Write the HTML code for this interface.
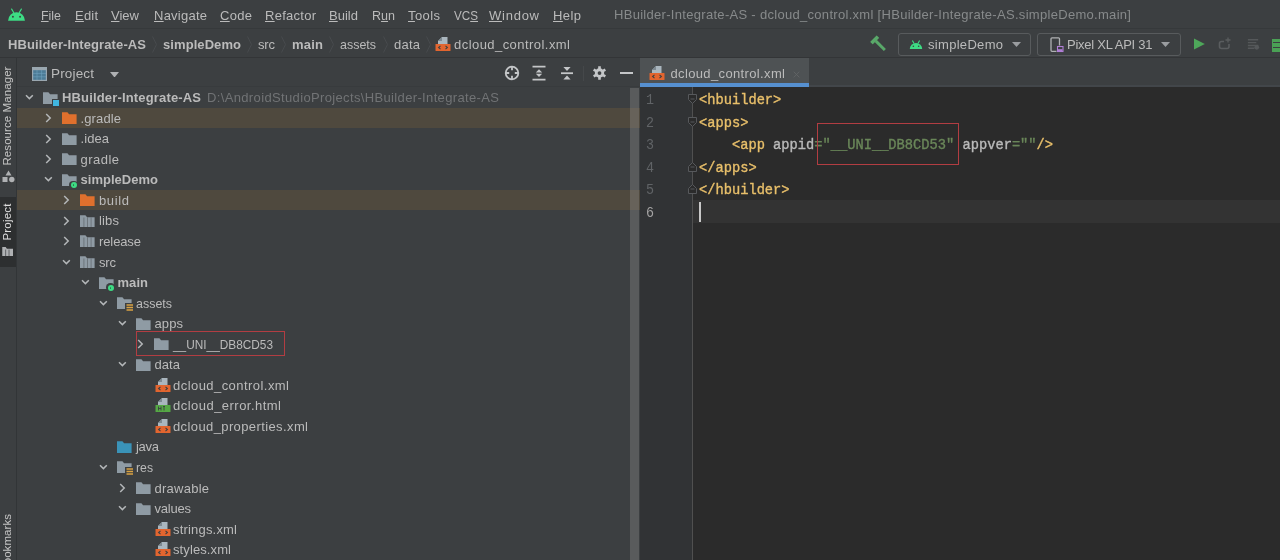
<!DOCTYPE html>
<html><head><meta charset="utf-8"><title>Android Studio</title><style>html,body{margin:0;padding:0;background:#3c3f41}
#root{position:relative;width:1280px;height:560px;overflow:hidden;font-family:"Liberation Sans",sans-serif;-webkit-font-smoothing:antialiased;will-change:transform}
#txt{position:absolute;left:0;top:0;width:1280px;height:560px;will-change:transform}
.t{position:absolute;white-space:pre;}
.r{position:absolute;display:block}
u{text-decoration:underline;text-underline-offset:0.6px;text-decoration-thickness:1px}
</style></head><body><div id="root">
<div class="r" style="left:0px;top:0px;width:1280px;height:560px;background:#3c3f41;"></div>
<div class="r" style="left:0px;top:28px;width:1280px;height:1px;background:#36393b;"></div>
<div class="r" style="left:0px;top:57px;width:1280px;height:1px;background:#333537;"></div>
<div class="r" style="left:0px;top:58px;width:16px;height:502px;background:#3c3f41;"></div>
<div class="r" style="left:16px;top:58px;width:1px;height:502px;background:#323537;"></div>
<div class="r" style="left:17px;top:86px;width:623px;height:1px;background:#383b3d;"></div>
<div class="r" style="left:640px;top:60px;width:640px;height:27px;background:#3c3f41;"></div>
<div class="r" style="left:809px;top:85px;width:471px;height:1.5px;background:#42464a;"></div>
<div class="r" style="left:640px;top:87px;width:640px;height:473px;background:#2b2b2b;"></div>
<div class="r" style="left:640px;top:87px;width:52px;height:473px;background:#313335;"></div>
<span class="t" style="left:41.00px;top:7.70px;font-size:13px;line-height:15.60px;font-weight:400;color:#bbbbbb;font-family:'Liberation Sans';letter-spacing:0.000px;transform:scaleX(0.9545);transform-origin:left center;"><u>F</u>ile</span>
<span class="t" style="left:75.00px;top:7.70px;font-size:13px;line-height:15.60px;font-weight:400;color:#bbbbbb;font-family:'Liberation Sans';letter-spacing:0.198px;"><u>E</u>dit</span>
<span class="t" style="left:111.00px;top:7.70px;font-size:13px;line-height:15.60px;font-weight:400;color:#bbbbbb;font-family:'Liberation Sans';letter-spacing:0.016px;"><u>V</u>iew</span>
<span class="t" style="left:154.00px;top:7.70px;font-size:13px;line-height:15.60px;font-weight:400;color:#bbbbbb;font-family:'Liberation Sans';letter-spacing:0.241px;"><u>N</u>avigate</span>
<span class="t" style="left:220.00px;top:7.70px;font-size:13px;line-height:15.60px;font-weight:400;color:#bbbbbb;font-family:'Liberation Sans';letter-spacing:0.307px;"><u>C</u>ode</span>
<span class="t" style="left:265.00px;top:7.70px;font-size:13px;line-height:15.60px;font-weight:400;color:#bbbbbb;font-family:'Liberation Sans';letter-spacing:0.266px;"><u>R</u>efactor</span>
<span class="t" style="left:329.00px;top:7.70px;font-size:13px;line-height:15.60px;font-weight:400;color:#bbbbbb;font-family:'Liberation Sans';letter-spacing:0.020px;"><u>B</u>uild</span>
<span class="t" style="left:372.00px;top:7.70px;font-size:13px;line-height:15.60px;font-weight:400;color:#bbbbbb;font-family:'Liberation Sans';letter-spacing:0.000px;transform:scaleX(0.9640);transform-origin:left center;">R<u>u</u>n</span>
<span class="t" style="left:408.00px;top:7.70px;font-size:13px;line-height:15.60px;font-weight:400;color:#bbbbbb;font-family:'Liberation Sans';letter-spacing:0.410px;"><u>T</u>ools</span>
<span class="t" style="left:454.00px;top:7.70px;font-size:13px;line-height:15.60px;font-weight:400;color:#bbbbbb;font-family:'Liberation Sans';letter-spacing:0.000px;transform:scaleX(0.8977);transform-origin:left center;">VC<u>S</u></span>
<span class="t" style="left:489.00px;top:7.70px;font-size:13px;line-height:15.60px;font-weight:400;color:#bbbbbb;font-family:'Liberation Sans';letter-spacing:0.750px;"><u>W</u>indow</span>
<span class="t" style="left:553.00px;top:7.70px;font-size:13px;line-height:15.60px;font-weight:400;color:#bbbbbb;font-family:'Liberation Sans';letter-spacing:0.417px;"><u>H</u>elp</span>
<span class="t" style="left:614.00px;top:6.80px;font-size:13px;line-height:15.60px;font-weight:400;color:#878a8b;font-family:'Liberation Sans';letter-spacing:0.299px;">HBuilder-Integrate-AS - dcloud_control.xml [HBuilder-Integrate-AS.simpleDemo.main]</span>
<svg class="r" style="left:6.5px;top:7px" width="19" height="14.78" viewBox="0 0 18 14"><path d="M1 13a8 8 0 0 1 16 0z" fill="#3ddc84"/><path d="M4.4 2l1.9 3.2M13.6 2l-1.9 3.2" stroke="#3ddc84" stroke-width="1.1" stroke-linecap="round"/><circle cx="5.6" cy="9.3" r="0.9" fill="#3c3f41"/><circle cx="12.4" cy="9.3" r="0.9" fill="#3c3f41"/></svg>
<span class="t" style="left:8.00px;top:36.80px;font-size:13px;line-height:15.60px;font-weight:700;color:#bbbbbb;font-family:'Liberation Sans';letter-spacing:0.110px;">HBuilder-Integrate-AS</span>
<span class="t" style="left:163.00px;top:36.80px;font-size:13px;line-height:15.60px;font-weight:700;color:#bbbbbb;font-family:'Liberation Sans';letter-spacing:0.076px;">simpleDemo</span>
<span class="t" style="left:258.00px;top:36.80px;font-size:13px;line-height:15.60px;font-weight:400;color:#bbbbbb;font-family:'Liberation Sans';letter-spacing:-0.172px;">src</span>
<span class="t" style="left:292.00px;top:36.80px;font-size:13px;line-height:15.60px;font-weight:700;color:#bbbbbb;font-family:'Liberation Sans';letter-spacing:0.219px;">main</span>
<span class="t" style="left:340.00px;top:36.80px;font-size:13px;line-height:15.60px;font-weight:400;color:#bbbbbb;font-family:'Liberation Sans';letter-spacing:0.000px;transform:scaleX(0.9580);transform-origin:left center;">assets</span>
<span class="t" style="left:394.00px;top:36.80px;font-size:13px;line-height:15.60px;font-weight:400;color:#bbbbbb;font-family:'Liberation Sans';letter-spacing:0.229px;">data</span>
<span class="t" style="left:454.00px;top:36.80px;font-size:13px;line-height:15.60px;font-weight:400;color:#bbbbbb;font-family:'Liberation Sans';letter-spacing:0.448px;">dcloud_control.xml</span>
<svg class="r" style="left:151px;top:36px" width="7" height="17" viewBox="0 0 7 17"><path d="M1.5 0.5L5.5 8.5L1.5 16.5" fill="none" stroke="#474a4d" stroke-width="1"/></svg>
<svg class="r" style="left:246px;top:36px" width="7" height="17" viewBox="0 0 7 17"><path d="M1.5 0.5L5.5 8.5L1.5 16.5" fill="none" stroke="#474a4d" stroke-width="1"/></svg>
<svg class="r" style="left:280px;top:36px" width="7" height="17" viewBox="0 0 7 17"><path d="M1.5 0.5L5.5 8.5L1.5 16.5" fill="none" stroke="#474a4d" stroke-width="1"/></svg>
<svg class="r" style="left:328px;top:36px" width="7" height="17" viewBox="0 0 7 17"><path d="M1.5 0.5L5.5 8.5L1.5 16.5" fill="none" stroke="#474a4d" stroke-width="1"/></svg>
<svg class="r" style="left:382px;top:36px" width="7" height="17" viewBox="0 0 7 17"><path d="M1.5 0.5L5.5 8.5L1.5 16.5" fill="none" stroke="#474a4d" stroke-width="1"/></svg>
<svg class="r" style="left:425px;top:36px" width="7" height="17" viewBox="0 0 7 17"><path d="M1.5 0.5L5.5 8.5L1.5 16.5" fill="none" stroke="#474a4d" stroke-width="1"/></svg>
<svg class="r" style="left:435px;top:36px" width="16" height="16" viewBox="0 0 16 16"><path d="M7 1h5.5v7H3V5z" fill="#aab6be"/><path d="M7 1v4H3z" fill="#7d8991"/><rect x="0.5" y="8" width="15" height="7" rx="0.5" fill="#e2652f"/><path d="M5.5 9.8L3.6 11.5l1.9 1.7M10.5 9.8l1.9 1.7l-1.9 1.7" stroke="#3c3f41" stroke-width="1.1" fill="none"/></svg>
<svg class="r" style="left:866px;top:32px" width="24" height="24" viewBox="866 32 24 24"><g transform="translate(873.4 38.6) rotate(-45)" fill="#59a869"><rect x="-4.6" y="0" width="9.2" height="3.6" rx="0.5"/><rect x="-1.45" y="3.2" width="2.9" height="13"/></g></svg>
<div class="r" style="left:898px;top:33px;width:133px;height:23px;box-sizing:border-box;border:1px solid #585b5d;border-radius:3px;background:#3c3f41"></div>
<div class="r" style="left:1037px;top:33px;width:144px;height:23px;box-sizing:border-box;border:1px solid #585b5d;border-radius:3px;background:#3c3f41"></div>
<svg class="r" style="left:908.5px;top:38.5px" width="14" height="10.9" viewBox="0 0 18 14"><path d="M1 13a8 8 0 0 1 16 0z" fill="#3ddc84"/><path d="M4.6 2.4l1.8 3M13.4 2.4l-1.8 3" stroke="#3ddc84" stroke-width="1.3" stroke-linecap="round"/><circle cx="5.6" cy="9.3" r="1" fill="#3c3f41"/><circle cx="12.4" cy="9.3" r="1" fill="#3c3f41"/></svg>
<span class="t" style="left:928.00px;top:36.70px;font-size:13px;line-height:15.60px;font-weight:400;color:#bbbbbb;font-family:'Liberation Sans';letter-spacing:0.306px;">simpleDemo</span>
<svg class="r" style="left:1012px;top:42px" width="9" height="5" viewBox="0 0 9 5"><path d="M0 0h9l-4.5 5z" fill="#9a9da0"/></svg>
<svg class="r" style="left:1161px;top:42px" width="9" height="5" viewBox="0 0 9 5"><path d="M0 0h9l-4.5 5z" fill="#9a9da0"/></svg>
<svg class="r" style="left:1050px;top:37px" width="14" height="16" viewBox="0 0 14 16"><rect x="1" y="0.8" width="8.5" height="13.5" rx="1" fill="none" stroke="#afb1b3" stroke-width="1.3"/><rect x="6.5" y="8.5" width="7" height="6.5" fill="#3c3f41"/><rect x="7.5" y="9.5" width="5.5" height="5" fill="none" stroke="#b07fd6" stroke-width="1.1"/><rect x="8" y="12.2" width="4.5" height="1.8" fill="#b07fd6"/></svg>
<span class="t" style="left:1067.00px;top:36.70px;font-size:13px;line-height:15.60px;font-weight:400;color:#bbbbbb;font-family:'Liberation Sans';letter-spacing:-0.260px;">Pixel XL API 31</span>
<svg class="r" style="left:1193px;top:38px" width="13" height="13" viewBox="0 0 13 13"><path d="M1 0.6L11.8 6.1L1 11.6z" fill="#4ea75a"/></svg>
<svg class="r" style="left:1217px;top:36px" width="16" height="16" viewBox="0 0 16 16"><path d="M11 1.5v5M8.5 4h5" stroke="#5a5d5f" stroke-width="1.3"/><path d="M7 5.5H4.5a2 2 0 0 0-2 2v3a2 2 0 0 0 2 2H10a2 2 0 0 0 2-2V8" fill="none" stroke="#5a5d5f" stroke-width="1.6"/></svg>
<svg class="r" style="left:1245.5px;top:37px" width="15" height="15" viewBox="0 0 16 16"><path d="M2 3h11M2 6h9M2 9h11M2 12h7" stroke="#55585a" stroke-width="1.5"/><circle cx="11.5" cy="11" r="2.5" fill="#55585a"/></svg>
<div class="r" style="left:1272px;top:38.5px;width:8px;height:13px;background:#4aa155;"></div>
<div class="r" style="left:1273px;top:42.3px;width:7px;height:1.2px;background:#3c3f41;"></div>
<div class="r" style="left:1273px;top:46.5px;width:7px;height:1.2px;background:#3c3f41;"></div>
<div class="r" style="left:0px;top:197px;width:16px;height:70px;background:#2d2f30;"></div>
<span class="t" style="left:8px;top:115.8px;font-size:11.5px;line-height:13.8px;color:#c4c4c4;letter-spacing:0.079px;transform:translate(-50%,-50%) rotate(-90deg);transform-origin:center">Resource Manager</span>
<span class="t" style="left:8px;top:222.2px;font-size:11.5px;line-height:13.8px;color:#dedede;letter-spacing:0.201px;transform:translate(-50%,-50%) rotate(-90deg);transform-origin:center">Project</span>
<span class="t" style="left:8px;top:542.5px;font-size:11.5px;line-height:13.8px;color:#c4c4c4;letter-spacing:0.059px;transform:translate(-50%,-50%) rotate(-90deg);transform-origin:center">Bookmarks</span>
<svg class="r" style="left:2px;top:170px" width="13" height="13" viewBox="0 0 13 13"><path d="M6.5 0.5l3 5h-6z" fill="#afb1b3"/><rect x="0.5" y="7" width="5" height="5" fill="#afb1b3"/><circle cx="9.8" cy="9.5" r="2.7" fill="#afb1b3"/></svg>
<svg class="r" style="left:1.5px;top:246.5px" width="11.5" height="9.3" viewBox="0 0 13 11"><path d="M0 0h4l1.5 2H13v9H0z" fill="#afb1b3"/><path d="M4 3v8M8 3v8" stroke="#3c3f41" stroke-width="0.8"/></svg>
<svg class="r" style="left:31.5px;top:66.5px" width="15" height="14" viewBox="0 0 15 14"><rect x="0.6" y="0.6" width="13.8" height="12.8" fill="#4c7b96" stroke="#9aa7b0" stroke-width="1.2"/><rect x="0.6" y="0.6" width="13.8" height="2.6" fill="#9aa7b0"/><path d="M5 3v10M9.6 3v10M1 6.4h13M1 9.8h13" stroke="#6fa1bd" stroke-width="0.6"/></svg>
<span class="t" style="left:51.00px;top:66.20px;font-size:13.5px;line-height:16.20px;font-weight:400;color:#bbbbbb;font-family:'Liberation Sans';letter-spacing:0.161px;">Project</span>
<svg class="r" style="left:110px;top:71.5px" width="9" height="5.5" viewBox="0 0 9 5.5"><path d="M0 0h9l-4.5 5.5z" fill="#afb1b3"/></svg>
<svg class="r" style="left:504px;top:65px" width="16" height="16" viewBox="0 0 16 16"><circle cx="8" cy="8" r="6.3" fill="none" stroke="#c4c6c8" stroke-width="1.8"/><path d="M8 1v4.2M8 10.8v4.2M1 8h4.2M10.8 8h4.2" stroke="#c4c6c8" stroke-width="1.8"/></svg>
<svg class="r" style="left:531.5px;top:65px" width="14" height="16" viewBox="0 0 14 16"><path d="M0.5 1.6h13M0.5 14.6h13" stroke="#c4c6c8" stroke-width="1.8"/><path d="M7 4.2l3.2 3.3H3.8zM7 12l3.2-3.3H3.8z" fill="#c4c6c8"/></svg>
<svg class="r" style="left:559.5px;top:65px" width="14" height="16" viewBox="0 0 14 16"><path d="M1 8.2h12" stroke="#c4c6c8" stroke-width="1.8"/><path d="M7 6l3.6-4H3.4zM7 10.4l3.6 4H3.4z" fill="#c4c6c8"/></svg>
<div class="r" style="left:583px;top:66px;width:1px;height:15px;background:#45484a;"></div>
<svg class="r" style="left:592px;top:65px" width="15" height="16" viewBox="0 0 16 16"><g fill="#c4c6c8"><circle cx="8" cy="8" r="5"/><g id="tth"><rect x="6.6" y="0.8" width="2.8" height="14.4"/></g><rect x="6.6" y="0.8" width="2.8" height="14.4" transform="rotate(60 8 8)"/><rect x="6.6" y="0.8" width="2.8" height="14.4" transform="rotate(120 8 8)"/></g><circle cx="8" cy="8" r="2" fill="#3c3f41"/></svg>
<div class="r" style="left:620px;top:72px;width:12.5px;height:2px;background:#c4c6c8;"></div>
<div class="r" style="left:17px;top:108px;width:623px;height:20px;background:#4f493e;"></div>
<div class="r" style="left:17px;top:190px;width:623px;height:20px;background:#4f493e;"></div>
<div class="r" style="left:630px;top:88px;width:9px;height:472px;background:rgba(166,166,166,0.28);"></div>
<svg class="r" style="left:25.4px;top:94.27250000000001px" width="9" height="7" viewBox="0 0 9 7"><path d="M1 1.2l3.4 3.4l3.4-3.4" fill="none" stroke="#b4b7b9" stroke-width="1.5"/></svg>
<svg class="r" style="left:43.0px;top:90.67250000000001px" width="16" height="14" viewBox="0 0 16 14"><path d="M0 1.3h5.4l1.7 2H14.6v9.7H0z" fill="#8f9ba4"/></svg>
<div class="r" style="left:52.2px;top:98.8725px;width:8px;height:8px;background:#3c3f41"></div>
<div class="r" style="left:53.2px;top:99.8725px;width:6px;height:6px;background:#40b6e0"></div>
<span class="t" style="left:62.00px;top:90.17px;font-size:13px;line-height:15.60px;font-weight:700;color:#bbbbbb;font-family:'Liberation Sans';letter-spacing:0.160px;">HBuilder-Integrate-AS</span>
<svg class="r" style="left:44.7px;top:113.2175px" width="7" height="10" viewBox="0 0 7 10"><path d="M1.2 1l4 4l-4 4" fill="none" stroke="#b4b7b9" stroke-width="1.5"/></svg>
<svg class="r" style="left:61.5px;top:111.2175px" width="16" height="14" viewBox="0 0 16 14"><path d="M0 1.3h5.4l1.7 2H14.6v9.7H0z" fill="#e0702d"/></svg>
<span class="t" style="left:80.50px;top:110.72px;font-size:13px;line-height:15.60px;font-weight:400;color:#bbbbbb;font-family:'Liberation Sans';letter-spacing:0.125px;">.gradle</span>
<svg class="r" style="left:44.7px;top:133.76250000000002px" width="7" height="10" viewBox="0 0 7 10"><path d="M1.2 1l4 4l-4 4" fill="none" stroke="#b4b7b9" stroke-width="1.5"/></svg>
<svg class="r" style="left:61.5px;top:131.76250000000002px" width="16" height="14" viewBox="0 0 16 14"><path d="M0 1.3h5.4l1.7 2H14.6v9.7H0z" fill="#8f9ba4"/></svg>
<span class="t" style="left:80.50px;top:131.26px;font-size:13px;line-height:15.60px;font-weight:400;color:#bbbbbb;font-family:'Liberation Sans';letter-spacing:0.074px;">.idea</span>
<svg class="r" style="left:44.7px;top:154.3075px" width="7" height="10" viewBox="0 0 7 10"><path d="M1.2 1l4 4l-4 4" fill="none" stroke="#b4b7b9" stroke-width="1.5"/></svg>
<svg class="r" style="left:61.5px;top:152.3075px" width="16" height="14" viewBox="0 0 16 14"><path d="M0 1.3h5.4l1.7 2H14.6v9.7H0z" fill="#8f9ba4"/></svg>
<span class="t" style="left:80.50px;top:151.81px;font-size:13px;line-height:15.60px;font-weight:400;color:#bbbbbb;font-family:'Liberation Sans';letter-spacing:0.472px;">gradle</span>
<svg class="r" style="left:43.9px;top:176.45250000000001px" width="9" height="7" viewBox="0 0 9 7"><path d="M1 1.2l3.4 3.4l3.4-3.4" fill="none" stroke="#b4b7b9" stroke-width="1.5"/></svg>
<svg class="r" style="left:61.5px;top:172.85250000000002px" width="16" height="14" viewBox="0 0 16 14"><path d="M0 1.3h5.4l1.7 2H14.6v9.7H0z" fill="#8f9ba4"/></svg>
<div class="r" style="left:69.3px;top:180.75250000000003px;width:8.4px;height:8.4px;border-radius:50%;background:#3c3f41"></div>
<div class="r" style="left:70.5px;top:181.95250000000001px;width:6px;height:6px;border-radius:50%;background:#3ddc84"></div>
<div class="r" style="left:72.6px;top:184.0525px;width:1.8px;height:1.8px;border-radius:50%;background:#2c7a4e"></div>
<span class="t" style="left:80.50px;top:172.35px;font-size:13px;line-height:15.60px;font-weight:700;color:#bbbbbb;font-family:'Liberation Sans';letter-spacing:0.021px;">simpleDemo</span>
<svg class="r" style="left:63.2px;top:195.39750000000004px" width="7" height="10" viewBox="0 0 7 10"><path d="M1.2 1l4 4l-4 4" fill="none" stroke="#b4b7b9" stroke-width="1.5"/></svg>
<svg class="r" style="left:80.0px;top:193.39750000000004px" width="16" height="14" viewBox="0 0 16 14"><path d="M0 1.3h5.4l1.7 2H14.6v9.7H0z" fill="#e0702d"/></svg>
<span class="t" style="left:99.00px;top:192.90px;font-size:13px;line-height:15.60px;font-weight:400;color:#bbbbbb;font-family:'Liberation Sans';letter-spacing:0.633px;">build</span>
<svg class="r" style="left:63.2px;top:215.94250000000002px" width="7" height="10" viewBox="0 0 7 10"><path d="M1.2 1l4 4l-4 4" fill="none" stroke="#b4b7b9" stroke-width="1.5"/></svg>
<svg class="r" style="left:80.0px;top:213.94250000000002px" width="16" height="14" viewBox="0 0 16 14"><path d="M0 1.3h5.4l1.7 2H14.6v9.7H0z" fill="#8f9ba4"/></svg>
<svg class="r" style="left:80.0px;top:213.54250000000002px" width="16" height="14" viewBox="0 0 16 14"><path d="M3.9 3.5v9.5M7.5 3.5v9.5M11.1 3.5v9.5" stroke="#3c3f41" stroke-width="0.8" opacity="0.5"/></svg>
<span class="t" style="left:99.00px;top:213.44px;font-size:13px;line-height:15.60px;font-weight:400;color:#bbbbbb;font-family:'Liberation Sans';letter-spacing:0.161px;">libs</span>
<svg class="r" style="left:63.2px;top:236.4875px" width="7" height="10" viewBox="0 0 7 10"><path d="M1.2 1l4 4l-4 4" fill="none" stroke="#b4b7b9" stroke-width="1.5"/></svg>
<svg class="r" style="left:80.0px;top:234.4875px" width="16" height="14" viewBox="0 0 16 14"><path d="M0 1.3h5.4l1.7 2H14.6v9.7H0z" fill="#8f9ba4"/></svg>
<svg class="r" style="left:80.0px;top:234.0875px" width="16" height="14" viewBox="0 0 16 14"><path d="M3.9 3.5v9.5M7.5 3.5v9.5M11.1 3.5v9.5" stroke="#3c3f41" stroke-width="0.8" opacity="0.5"/></svg>
<span class="t" style="left:99.00px;top:233.99px;font-size:13px;line-height:15.60px;font-weight:400;color:#bbbbbb;font-family:'Liberation Sans';letter-spacing:-0.107px;">release</span>
<svg class="r" style="left:62.4px;top:258.6325px" width="9" height="7" viewBox="0 0 9 7"><path d="M1 1.2l3.4 3.4l3.4-3.4" fill="none" stroke="#b4b7b9" stroke-width="1.5"/></svg>
<svg class="r" style="left:80.0px;top:255.0325px" width="16" height="14" viewBox="0 0 16 14"><path d="M0 1.3h5.4l1.7 2H14.6v9.7H0z" fill="#8f9ba4"/></svg>
<svg class="r" style="left:80.0px;top:254.6325px" width="16" height="14" viewBox="0 0 16 14"><path d="M3.9 3.5v9.5M7.5 3.5v9.5M11.1 3.5v9.5" stroke="#3c3f41" stroke-width="0.8" opacity="0.5"/></svg>
<span class="t" style="left:99.00px;top:254.53px;font-size:13px;line-height:15.60px;font-weight:400;color:#bbbbbb;font-family:'Liberation Sans';letter-spacing:-0.172px;">src</span>
<svg class="r" style="left:80.9px;top:279.1775px" width="9" height="7" viewBox="0 0 9 7"><path d="M1 1.2l3.4 3.4l3.4-3.4" fill="none" stroke="#b4b7b9" stroke-width="1.5"/></svg>
<svg class="r" style="left:98.5px;top:275.5775px" width="16" height="14" viewBox="0 0 16 14"><path d="M0 1.3h5.4l1.7 2H14.6v9.7H0z" fill="#8f9ba4"/></svg>
<div class="r" style="left:106.3px;top:283.4775px;width:8.4px;height:8.4px;border-radius:50%;background:#3c3f41"></div>
<div class="r" style="left:107.5px;top:284.6775px;width:6px;height:6px;border-radius:50%;background:#3ddc84"></div>
<div class="r" style="left:109.6px;top:286.77750000000003px;width:1.8px;height:1.8px;border-radius:50%;background:#2c7a4e"></div>
<span class="t" style="left:117.50px;top:275.08px;font-size:13px;line-height:15.60px;font-weight:700;color:#bbbbbb;font-family:'Liberation Sans';letter-spacing:0.052px;">main</span>
<svg class="r" style="left:99.4px;top:299.7225px" width="9" height="7" viewBox="0 0 9 7"><path d="M1 1.2l3.4 3.4l3.4-3.4" fill="none" stroke="#b4b7b9" stroke-width="1.5"/></svg>
<svg class="r" style="left:117.0px;top:296.1225px" width="16" height="14" viewBox="0 0 16 14"><path d="M0 1.3h5.4l1.7 2H14.6v9.7H0z" fill="#8f9ba4"/></svg>
<svg class="r" style="left:125.0px;top:302.7225px" width="9" height="9" viewBox="0 0 9 9"><rect x="0" y="0" width="9" height="9" fill="#3c3f41"/><path d="M1.5 2h6.5M1.5 4.5h6.5M1.5 7h6.5" stroke="#d9a343" stroke-width="1.4"/></svg>
<span class="t" style="left:136.00px;top:295.62px;font-size:13px;line-height:15.60px;font-weight:400;color:#bbbbbb;font-family:'Liberation Sans';letter-spacing:0.000px;transform:scaleX(0.9580);transform-origin:left center;">assets</span>
<svg class="r" style="left:117.9px;top:320.2675px" width="9" height="7" viewBox="0 0 9 7"><path d="M1 1.2l3.4 3.4l3.4-3.4" fill="none" stroke="#b4b7b9" stroke-width="1.5"/></svg>
<svg class="r" style="left:135.5px;top:316.66749999999996px" width="16" height="14" viewBox="0 0 16 14"><path d="M0 1.3h5.4l1.7 2H14.6v9.7H0z" fill="#8f9ba4"/></svg>
<span class="t" style="left:154.50px;top:316.17px;font-size:13px;line-height:15.60px;font-weight:400;color:#bbbbbb;font-family:'Liberation Sans';letter-spacing:0.099px;">apps</span>
<svg class="r" style="left:137.2px;top:339.2125px" width="7" height="10" viewBox="0 0 7 10"><path d="M1.2 1l4 4l-4 4" fill="none" stroke="#b4b7b9" stroke-width="1.5"/></svg>
<svg class="r" style="left:154.0px;top:337.2125px" width="16" height="14" viewBox="0 0 16 14"><path d="M0 1.3h5.4l1.7 2H14.6v9.7H0z" fill="#8f9ba4"/></svg>
<span class="t" style="left:173.00px;top:336.71px;font-size:13px;line-height:15.60px;font-weight:400;color:#bbbbbb;font-family:'Liberation Sans';letter-spacing:0.000px;transform:scaleX(0.9104);transform-origin:left center;">__UNI__DB8CD53</span>
<svg class="r" style="left:117.9px;top:361.3575px" width="9" height="7" viewBox="0 0 9 7"><path d="M1 1.2l3.4 3.4l3.4-3.4" fill="none" stroke="#b4b7b9" stroke-width="1.5"/></svg>
<svg class="r" style="left:135.5px;top:357.7575px" width="16" height="14" viewBox="0 0 16 14"><path d="M0 1.3h5.4l1.7 2H14.6v9.7H0z" fill="#8f9ba4"/></svg>
<span class="t" style="left:154.50px;top:357.26px;font-size:13px;line-height:15.60px;font-weight:400;color:#bbbbbb;font-family:'Liberation Sans';letter-spacing:0.062px;">data</span>
<svg class="r" style="left:155.0px;top:377px" width="16" height="16" viewBox="0 0 16 16"><path d="M7 1h5.5v7H3V5z" fill="#aab6be"/><path d="M7 1v4H3z" fill="#7d8991"/><rect x="0.5" y="8" width="15" height="7" rx="0.5" fill="#e2652f"/><path d="M5.5 9.8L3.6 11.5l1.9 1.7M10.5 9.8l1.9 1.7l-1.9 1.7" stroke="#3c3f41" stroke-width="1.1" fill="none"/></svg>
<span class="t" style="left:173.00px;top:377.80px;font-size:13px;line-height:15.60px;font-weight:400;color:#bbbbbb;font-family:'Liberation Sans';letter-spacing:0.448px;">dcloud_control.xml</span>
<svg class="r" style="left:155.0px;top:397px" width="16" height="16" viewBox="0 0 16 16"><path d="M7 1h5.5v7H3V5z" fill="#aab6be"/><path d="M7 1v4H3z" fill="#7d8991"/><rect x="0.5" y="8" width="15" height="7" rx="0.5" fill="#55a845"/><path d="M3.5 9.5v4M6 9.5v4M3.5 11.5h2.5M9 9.5v4M8 9.5h2" stroke="#3c3f41" stroke-width="0.9" fill="none"/></svg>
<span class="t" style="left:173.00px;top:398.35px;font-size:13px;line-height:15.60px;font-weight:400;color:#bbbbbb;font-family:'Liberation Sans';letter-spacing:0.472px;">dcloud_error.html</span>
<svg class="r" style="left:155.0px;top:418px" width="16" height="16" viewBox="0 0 16 16"><path d="M7 1h5.5v7H3V5z" fill="#aab6be"/><path d="M7 1v4H3z" fill="#7d8991"/><rect x="0.5" y="8" width="15" height="7" rx="0.5" fill="#e2652f"/><path d="M5.5 9.8L3.6 11.5l1.9 1.7M10.5 9.8l1.9 1.7l-1.9 1.7" stroke="#3c3f41" stroke-width="1.1" fill="none"/></svg>
<span class="t" style="left:173.00px;top:418.89px;font-size:13px;line-height:15.60px;font-weight:400;color:#bbbbbb;font-family:'Liberation Sans';letter-spacing:0.391px;">dcloud_properties.xml</span>
<svg class="r" style="left:117.0px;top:439.9375px" width="16" height="14" viewBox="0 0 16 14"><path d="M0 1.3h5.4l1.7 2H14.6v9.7H0z" fill="#3a93b8"/></svg>
<span class="t" style="left:136.00px;top:439.44px;font-size:13px;line-height:15.60px;font-weight:400;color:#bbbbbb;font-family:'Liberation Sans';letter-spacing:-0.286px;">java</span>
<svg class="r" style="left:99.4px;top:464.08250000000004px" width="9" height="7" viewBox="0 0 9 7"><path d="M1 1.2l3.4 3.4l3.4-3.4" fill="none" stroke="#b4b7b9" stroke-width="1.5"/></svg>
<svg class="r" style="left:117.0px;top:460.4825px" width="16" height="14" viewBox="0 0 16 14"><path d="M0 1.3h5.4l1.7 2H14.6v9.7H0z" fill="#8f9ba4"/></svg>
<svg class="r" style="left:125.0px;top:467.08250000000004px" width="9" height="9" viewBox="0 0 9 9"><rect x="0" y="0" width="9" height="9" fill="#3c3f41"/><path d="M1.5 2h6.5M1.5 4.5h6.5M1.5 7h6.5" stroke="#d9a343" stroke-width="1.4"/></svg>
<span class="t" style="left:136.00px;top:459.98px;font-size:13px;line-height:15.60px;font-weight:400;color:#bbbbbb;font-family:'Liberation Sans';letter-spacing:0.000px;transform:scaleX(0.9412);transform-origin:left center;">res</span>
<svg class="r" style="left:118.7px;top:483.0275px" width="7" height="10" viewBox="0 0 7 10"><path d="M1.2 1l4 4l-4 4" fill="none" stroke="#b4b7b9" stroke-width="1.5"/></svg>
<svg class="r" style="left:135.5px;top:481.0275px" width="16" height="14" viewBox="0 0 16 14"><path d="M0 1.3h5.4l1.7 2H14.6v9.7H0z" fill="#8f9ba4"/></svg>
<span class="t" style="left:154.50px;top:480.53px;font-size:13px;line-height:15.60px;font-weight:400;color:#bbbbbb;font-family:'Liberation Sans';letter-spacing:0.248px;">drawable</span>
<svg class="r" style="left:117.9px;top:505.1725px" width="9" height="7" viewBox="0 0 9 7"><path d="M1 1.2l3.4 3.4l3.4-3.4" fill="none" stroke="#b4b7b9" stroke-width="1.5"/></svg>
<svg class="r" style="left:135.5px;top:501.5725px" width="16" height="14" viewBox="0 0 16 14"><path d="M0 1.3h5.4l1.7 2H14.6v9.7H0z" fill="#8f9ba4"/></svg>
<span class="t" style="left:154.50px;top:501.07px;font-size:13px;line-height:15.60px;font-weight:400;color:#bbbbbb;font-family:'Liberation Sans';letter-spacing:-0.216px;">values</span>
<svg class="r" style="left:155.0px;top:521px" width="16" height="16" viewBox="0 0 16 16"><path d="M7 1h5.5v7H3V5z" fill="#aab6be"/><path d="M7 1v4H3z" fill="#7d8991"/><rect x="0.5" y="8" width="15" height="7" rx="0.5" fill="#e2652f"/><path d="M5.5 9.8L3.6 11.5l1.9 1.7M10.5 9.8l1.9 1.7l-1.9 1.7" stroke="#3c3f41" stroke-width="1.1" fill="none"/></svg>
<span class="t" style="left:173.00px;top:521.62px;font-size:13px;line-height:15.60px;font-weight:400;color:#bbbbbb;font-family:'Liberation Sans';letter-spacing:0.188px;">strings.xml</span>
<svg class="r" style="left:155.0px;top:541px" width="16" height="16" viewBox="0 0 16 16"><path d="M7 1h5.5v7H3V5z" fill="#aab6be"/><path d="M7 1v4H3z" fill="#7d8991"/><rect x="0.5" y="8" width="15" height="7" rx="0.5" fill="#e2652f"/><path d="M5.5 9.8L3.6 11.5l1.9 1.7M10.5 9.8l1.9 1.7l-1.9 1.7" stroke="#3c3f41" stroke-width="1.1" fill="none"/></svg>
<span class="t" style="left:173.00px;top:542.16px;font-size:13px;line-height:15.60px;font-weight:400;color:#bbbbbb;font-family:'Liberation Sans';letter-spacing:0.104px;">styles.xml</span>
<span class="t" style="left:207.00px;top:90.17px;font-size:13px;line-height:15.60px;font-weight:400;color:#717375;font-family:'Liberation Sans';letter-spacing:0.355px;">D:\AndroidStudioProjects\HBuilder-Integrate-AS</span>
<div class="r" style="left:136px;top:331px;width:149px;height:25px;box-sizing:border-box;border:1.5px solid #b23d42"></div>
<div class="r" style="left:640px;top:58px;width:169px;height:26px;background:#4e5254;"></div>
<div class="r" style="left:640px;top:83px;width:169px;height:4px;background:#5690d0;"></div>
<svg class="r" style="left:649px;top:65px" width="16" height="16" viewBox="0 0 16 16"><path d="M7 1h5.5v7H3V5z" fill="#aab6be"/><path d="M7 1v4H3z" fill="#7d8991"/><rect x="0.5" y="8" width="15" height="7" rx="0.5" fill="#e2652f"/><path d="M5.5 9.8L3.6 11.5l1.9 1.7M10.5 9.8l1.9 1.7l-1.9 1.7" stroke="#3c3f41" stroke-width="1.1" fill="none"/></svg>
<span class="t" style="left:670.50px;top:66.20px;font-size:13px;line-height:15.60px;font-weight:400;color:#bbbbbb;font-family:'Liberation Sans';letter-spacing:0.359px;">dcloud_control.xml</span>
<svg class="r" style="left:792.5px;top:70.5px" width="8" height="8" viewBox="0 0 9 9"><path d="M0.8 0.8l6.4 6.4M7.2 0.8l-6.4 6.4" stroke="#626567" stroke-width="1"/></svg>
<div class="r" style="left:693px;top:200px;width:587px;height:22.5px;background:#333333;"></div>
<span class="t" style="left:646.00px;top:92.15px;font-size:14.5px;line-height:17.40px;font-weight:400;color:#606366;font-family:'Liberation Mono';letter-spacing:0.000px;transform:scaleX(0.92);transform-origin:left center;">1</span>
<span class="t" style="left:646.00px;top:114.65px;font-size:14.5px;line-height:17.40px;font-weight:400;color:#606366;font-family:'Liberation Mono';letter-spacing:0.000px;transform:scaleX(0.92);transform-origin:left center;">2</span>
<span class="t" style="left:646.00px;top:137.15px;font-size:14.5px;line-height:17.40px;font-weight:400;color:#606366;font-family:'Liberation Mono';letter-spacing:0.000px;transform:scaleX(0.92);transform-origin:left center;">3</span>
<span class="t" style="left:646.00px;top:159.65px;font-size:14.5px;line-height:17.40px;font-weight:400;color:#606366;font-family:'Liberation Mono';letter-spacing:0.000px;transform:scaleX(0.92);transform-origin:left center;">4</span>
<span class="t" style="left:646.00px;top:182.15px;font-size:14.5px;line-height:17.40px;font-weight:400;color:#606366;font-family:'Liberation Mono';letter-spacing:0.000px;transform:scaleX(0.92);transform-origin:left center;">5</span>
<span class="t" style="left:646.00px;top:204.65px;font-size:14.5px;line-height:17.40px;font-weight:400;color:#a4a3a3;font-family:'Liberation Mono';letter-spacing:0.000px;transform:scaleX(0.92);transform-origin:left center;">6</span>
<span class="t" style="left:699px;top:90.30px;font-size:13.72px;line-height:22.5px;font-family:'Liberation Mono';font-weight:400;-webkit-text-stroke:0.35px"><span style="color:#e8bf6a">&lt;hbuilder&gt;</span></span>
<span class="t" style="left:699px;top:112.80px;font-size:13.72px;line-height:22.5px;font-family:'Liberation Mono';font-weight:400;-webkit-text-stroke:0.35px"><span style="color:#e8bf6a">&lt;apps&gt;</span></span>
<span class="t" style="left:699px;top:135.30px;font-size:13.72px;line-height:22.5px;font-family:'Liberation Mono';font-weight:400;-webkit-text-stroke:0.35px"><span style="color:#e8bf6a">    &lt;app</span><span style="color:#bababa"> appid</span><span style="color:#6a8759">=&quot;__UNI__DB8CD53&quot;</span><span style="color:#bababa"> appver</span><span style="color:#6a8759">=&quot;&quot;</span><span style="color:#e8bf6a">/&gt;</span></span>
<span class="t" style="left:699px;top:157.80px;font-size:13.72px;line-height:22.5px;font-family:'Liberation Mono';font-weight:400;-webkit-text-stroke:0.35px"><span style="color:#e8bf6a">&lt;/apps&gt;</span></span>
<span class="t" style="left:699px;top:180.30px;font-size:13.72px;line-height:22.5px;font-family:'Liberation Mono';font-weight:400;-webkit-text-stroke:0.35px"><span style="color:#e8bf6a">&lt;/hbuilder&gt;</span></span>
<div class="r" style="left:699px;top:202px;width:2px;height:19.5px;background:#c8c8c8;"></div>
<div class="r" style="left:692px;top:87px;width:1px;height:473px;background:#505050;"></div>
<svg class="r" style="left:688px;top:94px" width="9" height="10" viewBox="0 0 9 10"><path d="M0.5 0.5h8v5l-4 4l-4-4z" fill="#2b2b2b" stroke="#57595c" stroke-width="1"/><path d="M2.5 5h4" stroke="#57595c" stroke-width="1"/></svg>
<svg class="r" style="left:688px;top:116.5px" width="9" height="10" viewBox="0 0 9 10"><path d="M0.5 0.5h8v5l-4 4l-4-4z" fill="#2b2b2b" stroke="#57595c" stroke-width="1"/><path d="M2.5 5h4" stroke="#57595c" stroke-width="1"/></svg>
<svg class="r" style="left:688px;top:161.5px" width="9" height="10" viewBox="0 0 9 10"><path d="M0.5 9.5h8v-5l-4-4l-4 4z" fill="#2b2b2b" stroke="#57595c" stroke-width="1"/><path d="M2.5 5h4" stroke="#57595c" stroke-width="1"/></svg>
<svg class="r" style="left:688px;top:184px" width="9" height="10" viewBox="0 0 9 10"><path d="M0.5 9.5h8v-5l-4-4l-4 4z" fill="#2b2b2b" stroke="#57595c" stroke-width="1"/><path d="M2.5 5h4" stroke="#57595c" stroke-width="1"/></svg>
<div class="r" style="left:817px;top:123px;width:142px;height:42px;box-sizing:border-box;border:1.5px solid #b23d42"></div>
</div></body></html>
